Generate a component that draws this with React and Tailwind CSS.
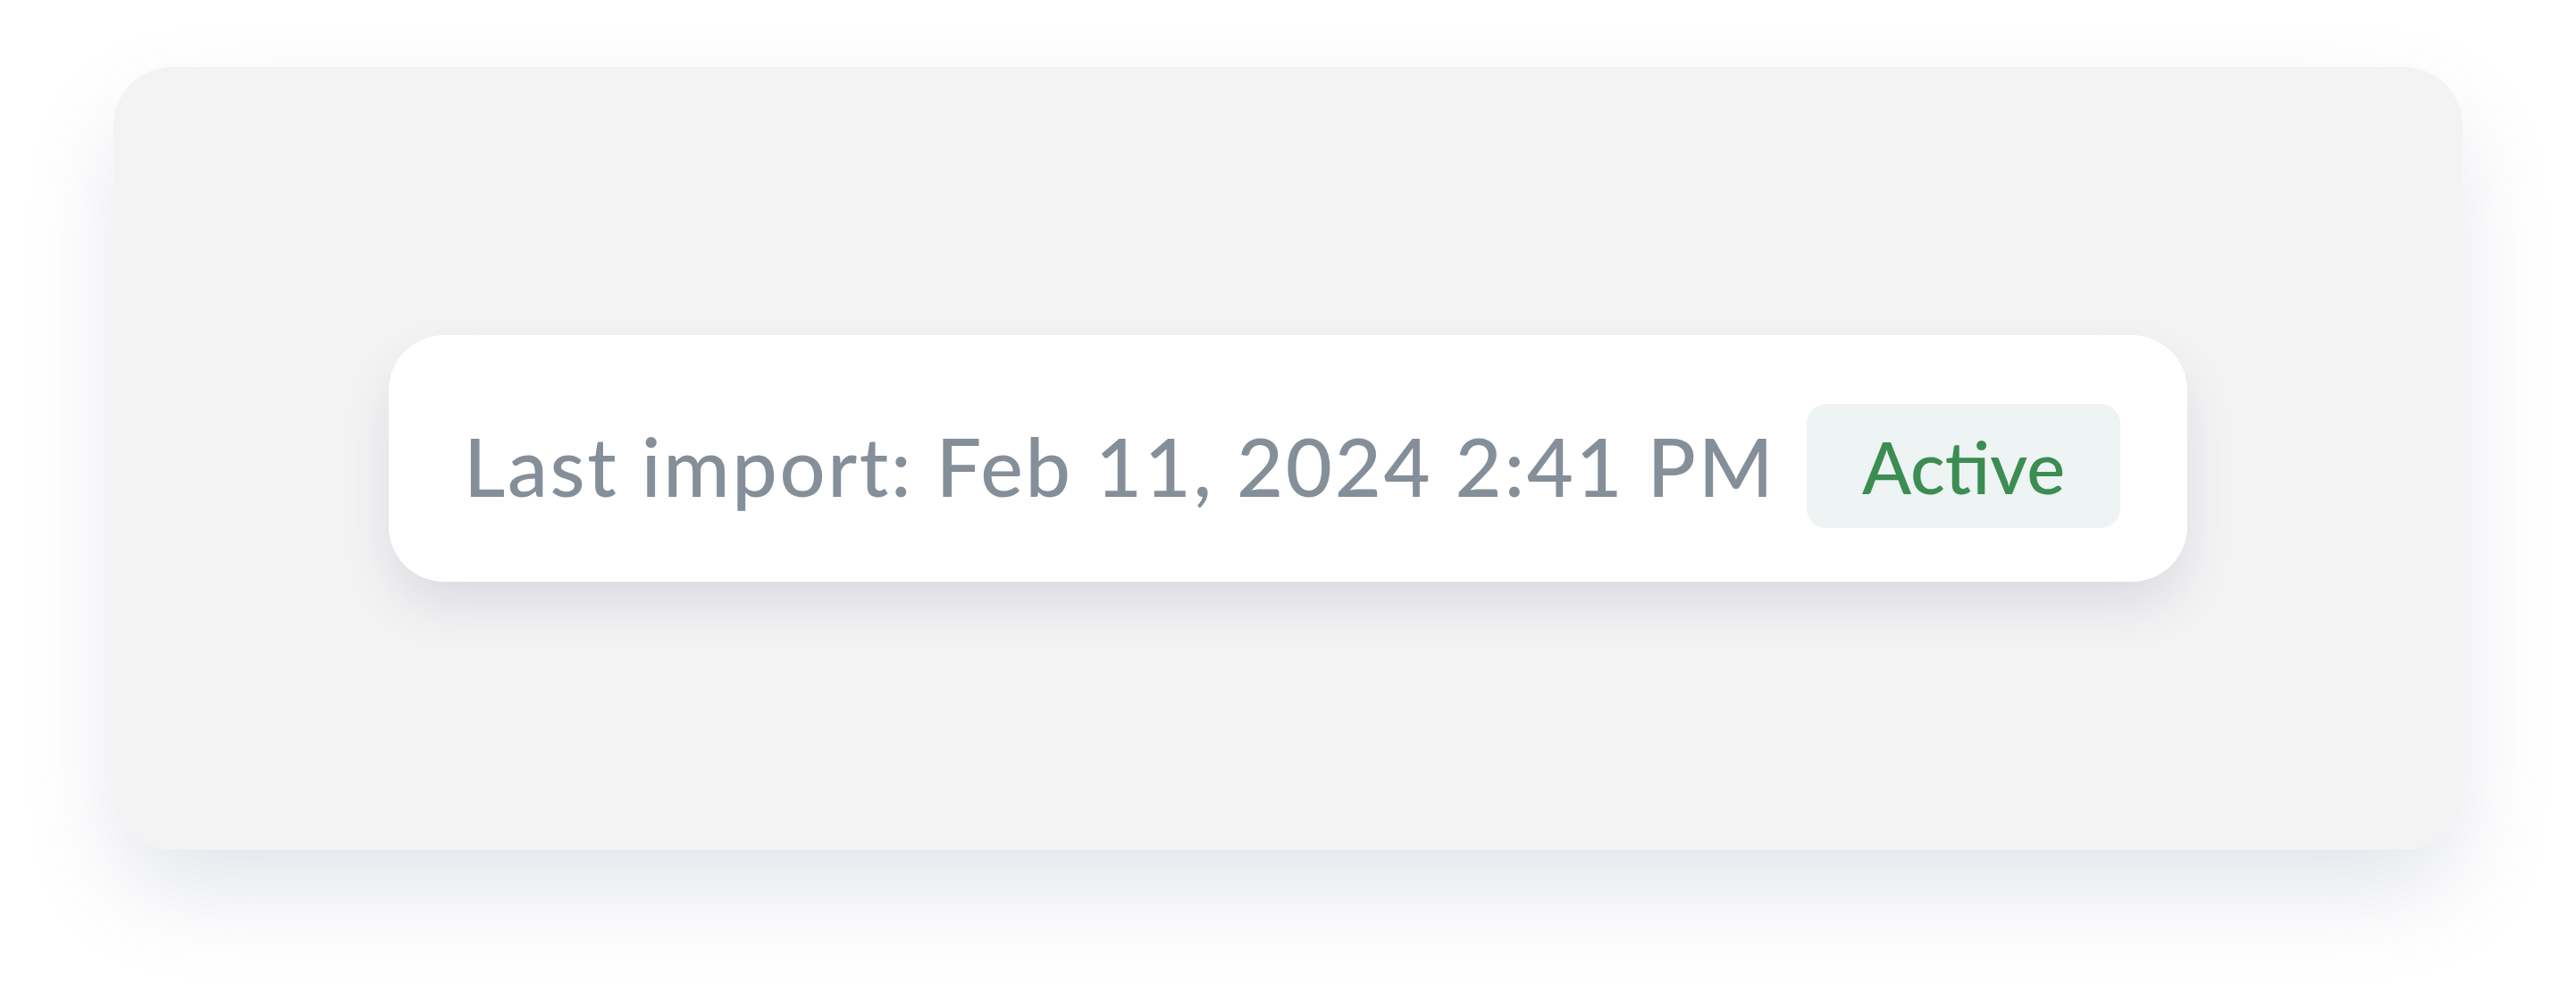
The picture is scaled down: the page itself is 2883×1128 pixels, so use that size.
import React from 'react';

const StatusPill = ({ label, status }) => {
  return (
    <div className="w-[2013px] h-[276px] bg-white rounded-[62px] flex items-center justify-between pt-[16px] pl-[84px] pr-[75px] shadow-[0_28px_60px_-10px_rgba(60,70,100,0.16)]">
      <span className="text-[90px] leading-none tracking-[2.6px] font-medium text-[#858f99] whitespace-nowrap">{label}</span>
      {/* Badge de estado */}
      <div className="w-[351px] h-[139px] rounded-[22px] bg-[#eef3f3] flex items-center justify-center">
        <span className="text-[81px] leading-none font-medium text-[#3b8d52]">{status}</span>
      </div>
    </div>
  );
};

const App = () => {
  return (
    <div
      className="w-full h-[1128px] bg-white pt-[75px] px-[127px]"
      style={{ fontFamily: 'Lato, "Open Sans", sans-serif' }}
    >
      <div className="h-[876px] rounded-[66px] bg-[#f3f3f4] flex items-center justify-center shadow-[0_50px_110px_-10px_rgba(90,100,140,0.18)]">
        <StatusPill label="Last import: Feb 11, 2024 2:41 PM" status="Active" />
      </div>
    </div>
  );
};

export default App;
